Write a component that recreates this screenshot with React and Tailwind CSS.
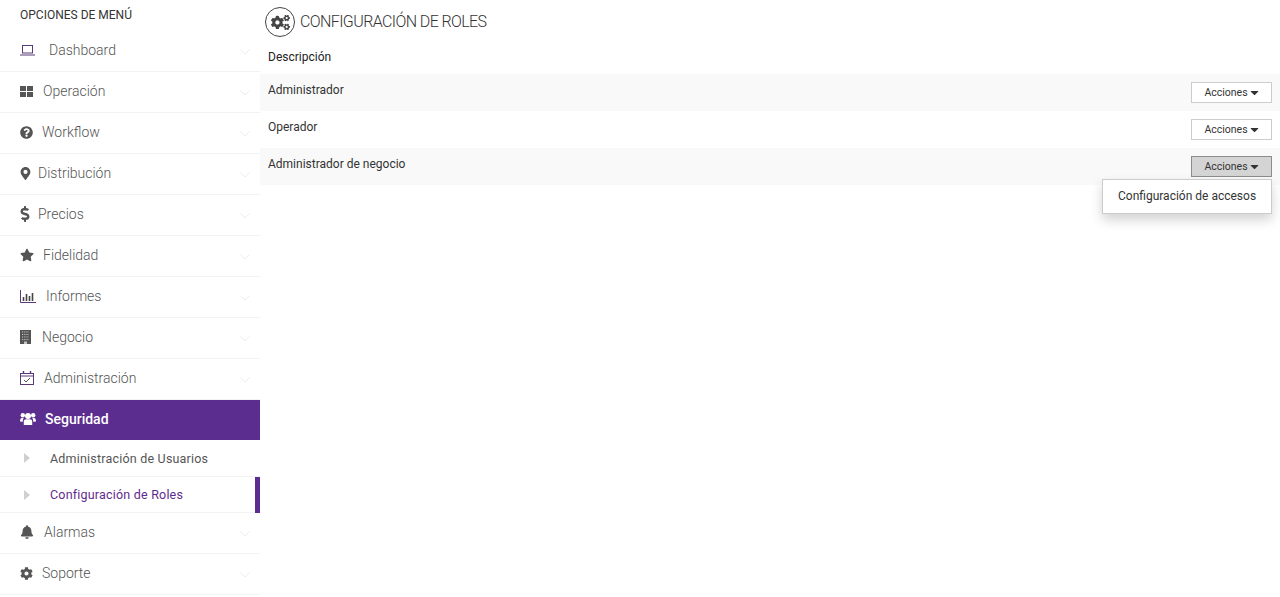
import {
    FaBell,
    FaCaretDown,
    FaCog,
    FaCogs,
    FaDollarSign,
    FaMapMarkerAlt,
    FaQuestionCircle,
    FaStar,
} from 'react-icons/fa';

const LaptopIcon = () => (
    <svg width="15" height="11" viewBox="0 0 15 11" fill="none" stroke="#5b3a78" strokeWidth="1">
        <rect x="2.5" y="0.5" width="10" height="7.5" />
        <path d="M0 10h15" />
    </svg>
);

const GridIcon = () => (
    <svg width="13" height="11" viewBox="0 0 13 11" fill="#555555">
        <rect width="6" height="5" />
        <rect x="7" width="6" height="5" />
        <rect y="6" width="6" height="5" />
        <rect x="7" y="6" width="6" height="5" />
    </svg>
);

const BarsIcon = () => (
    <svg width="16" height="13" viewBox="0 0 16 13" fill="none">
        <path d="M0.5 0v12.5H16" stroke="#5b3a78" />
        <path d="M3.5 7v4M6.5 4v7M9.5 6v5M12.5 3v8" stroke="#444444" strokeWidth="1.6" />
    </svg>
);

const BuildingIcon = () => (
    <svg width="11" height="14" viewBox="0 0 11 14">
        <rect width="11" height="14" fill="#555555" />
        <path d="M2 2h7M2 4.5h7M2 7h7M2 9.5h7" stroke="#c4c4c4" strokeDasharray="1.2 1" />
        <rect x="4" y="11.5" width="3" height="2.5" fill="#c4c4c4" />
    </svg>
);

const CalendarIcon = () => (
    <svg width="14" height="14" viewBox="0 0 14 14" fill="none" stroke="#5b3a78">
        <rect x="0.5" y="2.5" width="13" height="11" />
        <path d="M0.5 5h13" />
        <path d="M3.5 0v3M10.5 0v3" strokeWidth="1.4" />
        <path d="M4 9l2 2 4-4" stroke="#555555" />
    </svg>
);

const UsersIcon = () => (
    <svg width="16" height="14" viewBox="0 0 16 14" fill="white">
        <circle cx="8" cy="4" r="3" />
        <circle cx="2.8" cy="3.2" r="2.2" />
        <circle cx="13.2" cy="3.2" r="2.2" />
        <path d="M3.8 13V9.5C3.8 8 5 7.2 6 7.2h4c1 0 2.2.8 2.2 2.3V13z" />
        <path d="M0 9.5C0 7 .8 6 2 6h1.8C3 7 2.8 8 2.8 9.8z" />
        <path d="M16 9.5C16 7 15.2 6 14 6h-1.8c.8 1 1 2 1 3.8z" />
    </svg>
);

const SubCaret = () => (
    <svg className="mr-[20px] shrink-0" width="6" height="10" viewBox="0 0 6 10" fill="#cfcfcf">
        <path d="M0 0l6 5-6 5z" />
    </svg>
);

const Chevron = () => (
    <svg
        className="absolute right-[10px] top-[18px]"
        width="10"
        height="6"
        viewBox="0 0 10 6"
        fill="none"
        stroke="#ececec"
    >
        <path d="M0.5 0.5L5 5l4.5-4.5" />
    </svg>
);

const menuTop = [
    { label: 'Dashboard', box: 'w-[29px]', icon: <LaptopIcon /> },
    { label: 'Operación', box: 'w-[23px]', icon: <GridIcon /> },
    { label: 'Workflow', box: 'w-[22px]', icon: <FaQuestionCircle size={13} /> },
    { label: 'Distribución', box: 'w-[18px]', icon: <FaMapMarkerAlt size={13} className="-ml-[1px]" /> },
    { label: 'Precios', box: 'w-[18px]', icon: <FaDollarSign size={16} className="-ml-[3px]" /> },
    { label: 'Fidelidad', box: 'w-[23px]', icon: <FaStar size={14} /> },
    { label: 'Informes', box: 'w-[26px]', icon: <BarsIcon /> },
    { label: 'Negocio', box: 'w-[22px]', icon: <BuildingIcon /> },
    { label: 'Administración', box: 'w-[24px]', icon: <CalendarIcon /> },
];

const menuBottom = [
    { label: 'Alarmas', box: 'w-[24px]', icon: <FaBell size={14} /> },
    { label: 'Soporte', box: 'w-[22px]', icon: <FaCog size={13} /> },
];

const roles = ['Administrador', 'Operador', 'Administrador de negocio'];

const MenuItem = ({ item }) => (
    <div className="relative flex h-[41px] items-center border-b border-[#f3f3f3] pb-[2px] pl-5 text-[14px] font-light text-[#555555]">
        <span className={`flex ${item.box} shrink-0 items-center text-[#555555]`}>{item.icon}</span>
        {item.label}
        <Chevron />
    </div>
);

const SubItem = ({ label, active, height }) => (
    <div
        className={`relative flex items-center border-b border-[#f3f3f3] pl-6 text-[12.5px] tracking-[0.2px] ${height} ${
            active ? 'text-[#5f2c8c]' : 'text-[#555555]'
        }`}
    >
        <SubCaret />
        <span className="pt-[2px]">{label}</span>
        {active && <span className="absolute right-0 top-0 h-[36px] w-[5px] bg-[#5b2d8e]" />}
    </div>
);

const App = () => {
    return (
        <div className="flex h-[597px] overflow-hidden bg-white font-['Roboto',sans-serif] text-[#333333]">
            <aside className="w-[260px] shrink-0">
                <div className="flex h-[31px] items-center pb-[2px] pl-5 text-[12px] text-[#333333]">
                    OPCIONES DE MENÚ
                </div>
                {menuTop.map((item) => (
                    <MenuItem key={item.label} item={item} />
                ))}
                <div className="flex h-[40px] items-center bg-[#5b2d8e] pb-[2px] pl-5 text-[14px] font-medium text-white">
                    <span className="mr-[9px] flex w-[16px]">
                        <UsersIcon />
                    </span>
                    Seguridad
                </div>
                <SubItem label="Administración de Usuarios" height="h-[37px]" />
                <SubItem label="Configuración de Roles" height="h-[36px]" active />
                {menuBottom.map((item) => (
                    <MenuItem key={item.label} item={item} />
                ))}
            </aside>

            <main className="min-w-0 flex-1">
                <div className="flex h-[44px] items-center pl-[5px]">
                    <span className="mr-[5px] flex h-[30px] w-[30px] items-center justify-center rounded-full border border-[#444444] text-[#444444]">
                        <FaCogs size={19} />
                    </span>
                    <h1 className="text-[16px] font-light tracking-[-0.6px] text-[#333333]">CONFIGURACIÓN DE ROLES</h1>
                </div>
                <div className="flex h-[26px] items-center pl-2 text-[12px] text-[#222222]">Descripción</div>
                <div className="relative mt-[4px]">
                    {roles.map((role, index) => (
                        <div
                            key={role}
                            className={`flex h-[37px] justify-between pl-2 pr-2 text-[12px] ${
                                index % 2 === 0 ? 'bg-[#f9f9f9]' : 'bg-white'
                            }`}
                        >
                            <span className="pt-[7px] text-[#333333]">{role}</span>
                            <button
                                className={`mt-2 flex h-[21px] w-[81px] items-center justify-center border pl-[2px] text-[10.5px] text-[#333333] ${
                                    index === 2 ? 'border-[#8c8c8c] bg-[#d4d4d4]' : 'border-[#cccccc] bg-white'
                                }`}
                            >
                                Acciones
                                <FaCaretDown size={13} />
                            </button>
                        </div>
                    ))}
                    <div className="absolute right-2 top-[105px] flex h-[35px] w-[170px] items-center border border-[#cccccc] bg-white pb-[2px] pl-[15px] text-[12px] text-[#333333] shadow-[0_6px_12px_rgba(0,0,0,0.175)]">
                        Configuración de accesos
                    </div>
                </div>
            </main>
        </div>
    );
};

export default App;
